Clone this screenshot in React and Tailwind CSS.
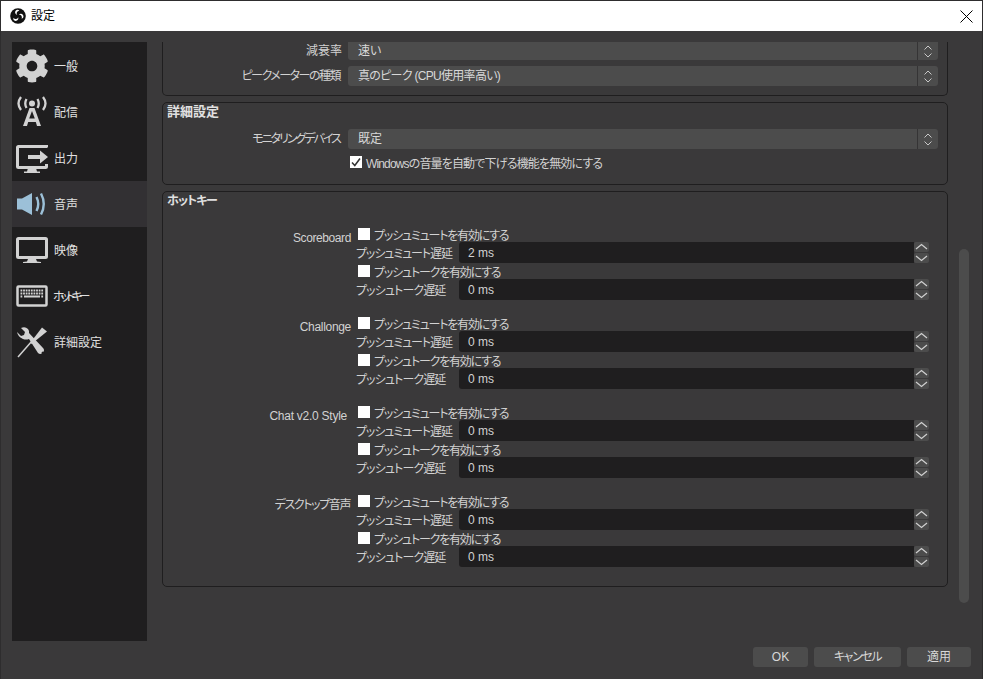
import React from "react";
import { FaCog } from "react-icons/fa";

const font = { fontFamily: '"Liberation Sans","Noto Sans CJK JP",sans-serif' };

const Obs = () => (
  <svg width="16" height="16" viewBox="0 0 16 16">
    <circle cx="8" cy="8" r="7.8" fill="#111" />
    <g fill="#fff">
      <path d="M5.600 2.800a2.600 2.600 0 0 1 3.800 0 2.600 2.600 0 0 0-2.500 1.500 2.600 2.600 0 0 0 .3 2.700 2.700 2.700 0 0 1-1.600-4.200Z" />
      <path d="M13.200 7.200a2.600 2.600 0 0 1-1.700 3.400 2.600 2.600 0 0 0-.1-2.900 2.600 2.600 0 0 0-2.500-1 2.700 2.700 0 0 1 4.300.5Z" />
      <path d="M5.600 12.900a2.600 2.600 0 0 1-2.100-3.200 2.600 2.600 0 0 0 2.600 1.300 2.600 2.600 0 0 0 2.100-1.800 2.700 2.700 0 0 1-2.600 3.700Z" />
    </g>
  </svg>
);

const c = "#d2d2d2";
const Antenna = () => (
  <svg width="32" height="32" viewBox="0 0 32 32" fill="none" stroke={c}>
    <circle cx="16" cy="7.500" r="3" fill={c} stroke="none" />
    <path d="M10.500 3Q8 7.500 10.500 12M21.500 3Q24 7.500 21.500 12M5 1Q0 7.500 5 14M27 1Q32 7.500 27 14" strokeWidth="2.300" />
    <path d="M7 30 13.500 12h5L25 30h-4l-1.200-4h-7.600l-1.200 4ZM13.200 22.500h5.600L16 15Z" fill={c} stroke="none" fillRule="evenodd" />
  </svg>
);
const Output = () => (
  <svg width="32" height="32" viewBox="0 0 32 32" fill="none">
    <path d="M31 5.500V4.500H2.500a1 1 0 0 0-1 1v19a1 1 0 0 0 1 1h27a1 1 0 0 0 1-1V22" stroke={c} strokeWidth="3" />
    <path d="M12 26h8l1 3.500H24V31H8v-1.500h3Z" fill={c} />
    <path d="M12 13h12V8.500L32 15l-8 6.500V17H12Z" fill={c} />
  </svg>
);
const Speaker = () => (
  <svg width="32" height="32" viewBox="0 0 32 32" fill="none">
    <path d="M1 10.500h5L16 5v22L6 21.500H1Z" fill="#9cc0d8" />
    <path d="M20.500 9q3.500 7 0 14M25 5.500q5.500 10.500 0 21" stroke="#9cc0d8" strokeWidth="2.400" />
  </svg>
);
const Monitor = () => (
  <svg width="32" height="32" viewBox="0 0 32 32" fill="none">
    <rect x="1.500" y="4.500" width="29" height="19" rx="1" stroke={c} strokeWidth="3" />
    <path d="M12 25h8l1 2.500 4 .5v1H7v-1l4-.5Z" fill={c} />
  </svg>
);
const Keyboard = () => {
  const keys = [];
  for (let r = 0; r < 3; r++)
    for (let k = 0; k < 9; k++) {
      if (r === 2 && k > 0 && k < 8) continue;
      keys.push(<rect key={r + "-" + k} x={4.500 + k * 2.600} y={9.500 + r * 3} width="1.800" height="2" fill={c} />);
    }
  return (
    <svg width="32" height="32" viewBox="0 0 32 32" fill="none">
      <rect x="1.500" y="6.500" width="29" height="19" rx="1" stroke={c} strokeWidth="2.500" />
      {keys}
      <rect x="8" y="15.500" width="16" height="2" fill={c} />
    </svg>
  );
};
const Tools = () => (
  <svg width="32" height="32" viewBox="0 0 32 32" fill="none">
    <path d="M2 31 16 15" stroke={c} strokeWidth="1.500" />
    <path d="M14.500 16.500 26 1.500l5 4-15.500 12.500Z" fill={c} />
    <path d="M1 6l4 4 3-1 1-3-4-4q4-2 7 1 1.500 2 1 4l14 15q2 2 0 5-3 2-5 0L13 13q-3 1-6 0-5-2-6-7Z" fill={c} />
    <circle cx="27" cy="27" r="1.500" fill="#1f1e1f" />
  </svg>
);

const items = [
  ["一般", <FaCog size={34} color={c} className="-mx-px" />, ""],
  ["配信", <Antenna />, ""],
  ["出力", <Output />, ""],
  ["音声", <Speaker />, ""],
  ["映像", <Monitor />, ""],
  ["ホットキー", <Keyboard />, "ml-[5px] tracking-[-4px]"],
  ["詳細設定", <Tools />, ""],
];

const Updown = () => (
  <div className="flex h-full w-[21px] shrink-0 flex-col items-center justify-center gap-[3px] border-l border-[#353435]">
    <svg width="8" height="5" viewBox="0 0 8 5" fill="none" stroke="#c8c8c8"><path d="M.5 4.500 4 1l3.500 3.500" /></svg>
    <svg width="8" height="5" viewBox="0 0 8 5" fill="none" stroke="#c8c8c8"><path d="M.5.500 4 4l3.500-3.500" /></svg>
  </div>
);

const Select = ({ value, h, cls = "", track = "" }) => (
  <div className={"flex flex-1 items-center rounded-[3px] bg-[#4c4c4c] pl-[10px] " + h + " " + cls}>
    <span className={"flex-1 text-[12px] text-[#d8d8d8] " + track}>{value}</span>
    <Updown />
  </div>
);

const SelectRow = ({ label, labelCls = "pr-[6px]", value, h, cls, track }) => (
  <div className="flex items-center">
    <div className={"w-[185px] text-right text-[12px] whitespace-nowrap text-[#d2d2d2] " + labelCls}>{label}</div>
    <Select value={value} h={h} cls={cls} track={track} />
  </div>
);

const Check = ({ label, checked, track = "tracking-[-1.2px]" }) => (
  <div className="flex h-[16px] items-center pl-[2px]">
    <div className="flex h-[12px] w-[12px] items-center justify-center bg-white">
      {checked && (
        <svg width="10" height="10" viewBox="0 0 10 10" fill="none" stroke="#333" strokeWidth="1.500"><path d="M1 5.500 3.800 8.500 9 1.500" /></svg>
      )}
    </div>
    <span className={"ml-[4px] pt-[3px] text-[12px] leading-none whitespace-nowrap text-[#d2d2d2] " + track}>{label}</span>
  </div>
);

const Spin = ({ label, value, track }) => (
  <div className="flex h-[21px] items-center">
    <div className={"w-[103px] pt-[2px] text-[12px] whitespace-nowrap text-[#d2d2d2] " + track}>{label}</div>
    <div className="flex h-full flex-1 items-center rounded-l-[3px] bg-[#1f1e1f] pl-[9px] text-[12px] text-[#d2d2d2]">{value}</div>
    <div className="flex h-full w-[15px] flex-col gap-px">
      {["M2 7 7.500 2.500 13 7", "M2 3 7.500 7.500 13 3"].map((d) => (
        <div key={d} className="flex flex-1 items-center justify-center rounded-[2px] bg-[#4c4c4c]">
          <svg width="15" height="10" viewBox="0 0 15 10" fill="none" stroke="#d0d0d0" strokeWidth="1.200"><path d={d} /></svg>
        </div>
      ))}
    </div>
  </div>
);

const Hotkey = ({ name, v, cls = "" }) => (
  <div className="flex">
    <div className={"w-[189px] pt-[4px] text-right text-[12px] leading-[16px] text-[#d2d2d2] " + cls}>{name}</div>
    <div className="ml-[4px] flex-1">
      <Check label="プッシュミュートを有効にする" />
      <Spin label="プッシュミュート遅延" value={v} track="tracking-[-1.1px]" />
      <Check label="プッシュトークを有効にする" />
      <Spin label="プッシュトーク遅延" value="0 ms" track="tracking-[-0.9px]" />
    </div>
  </div>
);

const Button = ({ w, track = "", children }) => (
  <div className={"flex h-[20px] items-center justify-center rounded-[3px] bg-[#4c4c4c] text-[12px] text-[#d8d8d8] " + w + " " + track}>{children}</div>
);

export default function App() {
  return (
    <div style={font} className="flex h-[679px] w-[983px] flex-col overflow-hidden border border-[#2e2d2e] border-b-0 bg-[#3a393a] [font-feature-settings:'palt']">
      <div className="flex h-[30px] shrink-0 items-center bg-white pl-[9px] pr-[9px] text-[12px] text-black">
        <Obs />
        <span className="ml-[5px] flex-1">設定</span>
        <svg width="13" height="13" viewBox="0 0 13 13" stroke="#000" strokeWidth="1"><path d="M.5.500l12 12M12.500.500l-12 12" /></svg>
      </div>
      <div className="flex h-[599px] mt-[11px] ml-[11px] shrink-0">
        <nav className="w-[135px] shrink-0 bg-[#1f1e1f] pt-px">
          {items.map(([label, icon, cls], i) => (
            <div key={label} className={"flex h-[46px] items-center pl-[4px] " + (i === 3 ? "bg-[#323033]" : "")}>
              {icon}
              <span className={"pt-[2px] text-[12px] whitespace-nowrap text-[#e0e0e0] " + (cls || "ml-[6px]")}>{label}</span>
            </div>
          ))}
        </nav>
        <main className="ml-[15px] w-[786px] shrink-0 overflow-hidden">
          <section className="h-[54px] rounded-b-[5px] border border-t-0 border-[#1f1e1f] pr-[9px]">
            <div className="flex flex-col gap-[6px]">
              <SelectRow label="減衰率" value="速い" h="h-[18px]" cls="rounded-t-none" />
              <SelectRow label="ピークメーターの種類" labelCls="pr-[8px] tracking-[-1.5px]" value="真のピーク (CPU使用率高い)" track="tracking-[-0.7px]" h="h-[20px]" />
            </div>
          </section>
          <section className="mt-[6px] h-[83px] rounded-[5px] border border-[#1f1e1f] pr-[9px]">
            <h2 className="pl-[4px] text-[13px] font-bold leading-[18px] text-[#e0e0e0]">詳細設定</h2>
            <div className="mt-[8px]">
              <SelectRow label="モニタリングデバイス" labelCls="pr-[8px] tracking-[-2px]" value="既定" h="h-[20px]" />
            </div>
            <div className="mt-[3px] ml-[185px] flex h-[20px] items-center">
              <Check checked label="Windowsの音量を自動で下げる機能を無効にする" track="tracking-[-0.85px]" />
            </div>
          </section>
          <section className="mt-[6px] h-[396px] rounded-[5px] border border-[#1f1e1f] pr-[18px]">
            <h2 className="pl-[4px] pt-[1px] text-[12px] font-bold leading-[16px] tracking-[-1px] text-[#e0e0e0]">ホットキー</h2>
            <div className="mt-[17px] flex flex-col gap-[15px]">
              <Hotkey name="Scoreboard" v="2 ms" cls="pr-px tracking-[-0.4px]" />
              <Hotkey name="Challonge" v="0 ms" cls="pr-px tracking-[-0.3px]" />
              <Hotkey name="Chat v2.0 Style" v="0 ms" cls="pr-[5px] tracking-[-0.25px]" />
              <Hotkey name="デスクトップ音声" v="0 ms" cls="pr-[2px] tracking-[-1.4px]" />
            </div>
          </section>
        </main>
        <div className="ml-[11px] mt-[207px] h-[354px] w-[10px] rounded-[5px] bg-[#4c4c4c]" />
      </div>
      <div className="mr-[11px] mt-[6px] flex justify-end gap-[6px]">
        <Button w="w-[55px]">OK</Button>
        <Button w="w-[87px]" track="tracking-[-1.4px]">キャンセル</Button>
        <Button w="w-[64px]">適用</Button>
      </div>
    </div>
  );
}
